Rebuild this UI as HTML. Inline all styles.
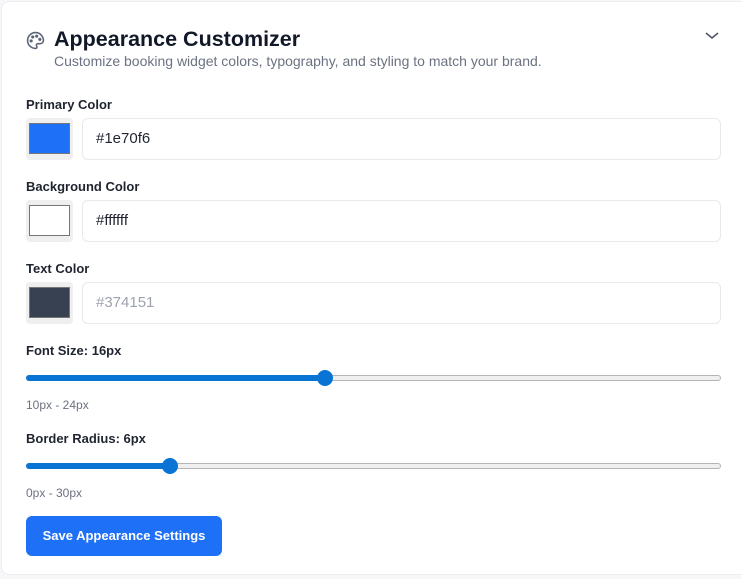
<!DOCTYPE html>
<html><head><style>
*{box-sizing:border-box;margin:0;padding:0}
body{width:741px;height:579px;background:#f6f7f9;font-family:"Liberation Sans",sans-serif;position:relative;overflow:hidden}
.card{position:absolute;left:1px;top:1px;width:760px;height:574px;background:#fff;border:1px solid #ebedf0;border-radius:8px}
.abs{position:absolute}
.lbl{position:absolute;left:26px;font-size:13px;font-weight:bold;color:#1f2430}
.sw{position:absolute;left:26px;width:47px;height:42px;background:#efefef;border-radius:4px}
.sw div{position:absolute;left:3px;top:5px;width:41px;height:31px;border:1px solid #767676}
.inp{position:absolute;left:82px;width:639px;height:42px;border:1px solid #e8e9ec;border-radius:6px;font-size:15px;color:#1f2430;padding:11px 0 0 13px}
.track{position:absolute;left:26px;width:695px;height:6px;border:1px solid #b5b5b5;background:#efefef;border-radius:3px}
.fill{position:absolute;left:26px;height:6px;background:#0a74d5;border-radius:3px}
.thumb{position:absolute;width:16px;height:16px;border-radius:50%;background:#0a74d5}
.hint{position:absolute;left:26px;font-size:12px;color:#6b7280}
</style></head><body>
<div class="card"></div>
<svg class="abs" style="left:26px;top:31px" width="19" height="19" viewBox="0 0 24 24" fill="none" stroke="#5b6577" stroke-width="2" stroke-linecap="round" stroke-linejoin="round"><path d="M12 22a10 10 0 1 1 10-10c0 2.5-2 4-4.5 4H15a2 2 0 0 0-1.5 3.3A1.7 1.7 0 0 1 12 22z"/><circle cx="13.5" cy="6.5" r="1" fill="#5b6577"/><circle cx="17.5" cy="10.5" r="1" fill="#5b6577"/><circle cx="8.5" cy="7.5" r="1" fill="#5b6577"/><circle cx="6.5" cy="12.5" r="1" fill="#5b6577"/></svg>
<div class="abs" style="left:54px;top:27px;font-size:21.5px;font-weight:bold;color:#111827">Appearance Customizer</div>
<div class="abs" style="left:54px;top:53px;font-size:14px;color:#6b7280">Customize booking widget colors, typography, and styling to match your brand.</div>
<svg class="abs" style="left:704px;top:30px" width="16" height="12" viewBox="0 0 16 12"><path d="M2 3l6 5 6-5" fill="none" stroke="#4b5563" stroke-width="1.5"/></svg>

<div class="lbl" style="top:97px">Primary Color</div>
<div class="sw" style="top:118px"><div style="background:#1e70f6"></div></div>
<div class="inp" style="top:118px">#1e70f6</div>

<div class="lbl" style="top:179px">Background Color</div>
<div class="sw" style="top:200px"><div style="background:#fff"></div></div>
<div class="inp" style="top:200px">#ffffff</div>

<div class="lbl" style="top:261px">Text Color</div>
<div class="sw" style="top:282px"><div style="background:#374151"></div></div>
<div class="inp" style="top:282px;color:#9ca3af">#374151</div>

<div class="lbl" style="top:343px">Font Size: 16px</div>
<div class="track" style="top:375px"></div>
<div class="fill" style="top:375px;width:299px"></div>
<div class="thumb" style="left:317px;top:370px"></div>
<div class="hint" style="top:398px">10px - 24px</div>

<div class="lbl" style="top:431px">Border Radius: 6px</div>
<div class="track" style="top:463px"></div>
<div class="fill" style="top:463px;width:144px"></div>
<div class="thumb" style="left:162px;top:458px"></div>
<div class="hint" style="top:486px">0px - 30px</div>

<div class="abs" style="left:26px;top:516px;width:196px;height:40px;background:#1e70f6;border-radius:6px;color:#fff;font-size:13px;font-weight:bold;text-align:center;line-height:40px">Save Appearance Settings</div>
</body></html>
